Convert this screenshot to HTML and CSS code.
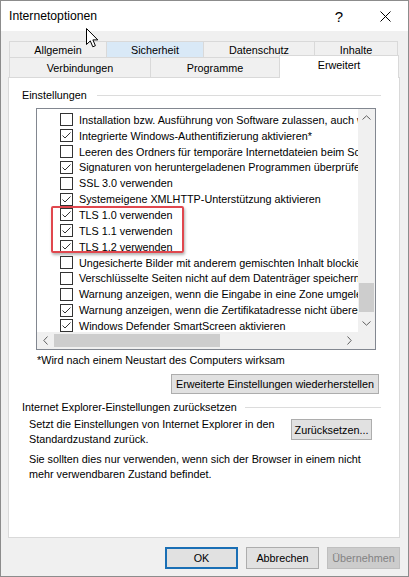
FILE: index.html
```html
<!DOCTYPE html>
<html>
<head>
  <title>Internetoptionen</title>
  <link rel="stylesheet" href="styles.css">
</head>
<body>
  <div class="window">
    <div class="titlebar">
      <span class="title">Internetoptionen</span>
      <span class="help">?</span>
      <svg class="close" width="11" height="11" viewBox="0 0 11 11">
        <path d="M0.5 0.5 L10.5 10.5 M10.5 0.5 L0.5 10.5" stroke="#000" stroke-width="1" fill="none"/>
      </svg>
    </div>
    <div class="body">
      <div class="tab-row back">
        <div class="tab allgemein">Allgemein</div>
        <div class="tab sicherheit hover">Sicherheit</div>
        <div class="tab datenschutz">Datenschutz</div>
        <div class="tab inhalte last">Inhalte</div>
      </div>
      <div class="tab-row front">
        <div class="tab verbindungen">Verbindungen</div>
        <div class="tab programme">Programme</div>
        <div class="tab erweitert selected">Erweitert</div>
      </div>
      <div class="panel">
        <div class="group-title">
          <span>Einstellungen</span>
          <div class="rule"></div>
        </div>
        <div class="listbox">
          <div class="list-main">
            <div class="rows">
              <div class="row"><span class="check"></span>Installation bzw. Ausführung von Software zulassen, auch wenn die Signatur ungültig ist</div>
              <div class="row"><span class="check on"></span>Integrierte Windows-Authentifizierung aktivieren*</div>
              <div class="row"><span class="check"></span>Leeren des Ordners für temporäre Internetdateien beim Schließen des Browsers</div>
              <div class="row"><span class="check on"></span>Signaturen von heruntergeladenen Programmen überprüfen</div>
              <div class="row"><span class="check"></span>SSL 3.0 verwenden</div>
              <div class="row"><span class="check on"></span>Systemeigene XMLHTTP-Unterstützung aktivieren</div>
              <div class="row"><span class="check on"></span>TLS 1.0 verwenden</div>
              <div class="row"><span class="check on"></span>TLS 1.1 verwenden</div>
              <div class="row"><span class="check on"></span>TLS 1.2 verwenden</div>
              <div class="row"><span class="check"></span>Ungesicherte Bilder mit anderem gemischten Inhalt blockieren</div>
              <div class="row"><span class="check"></span>Verschlüsselte Seiten nicht auf dem Datenträger speichern</div>
              <div class="row"><span class="check"></span>Warnung anzeigen, wenn die Eingabe in eine Zone umgeleitet wird</div>
              <div class="row"><span class="check on"></span>Warnung anzeigen, wenn die Zertifikatadresse nicht übereinstimmt*</div>
              <div class="row"><span class="check on"></span>Windows Defender SmartScreen aktivieren</div>
            </div>
            <div class="vscroll">
              <div class="arrow">
                <svg width="9" height="5" viewBox="0 0 9 5"><path d="M0.5 4.5 L4.5 0.8 L8.5 4.5" stroke="#606060" fill="none"/></svg>
              </div>
              <div class="vtrack"><div class="vthumb"></div></div>
              <div class="arrow">
                <svg width="9" height="5" viewBox="0 0 9 5"><path d="M0.5 0.5 L4.5 4.2 L8.5 0.5" stroke="#606060" fill="none"/></svg>
              </div>
            </div>
          </div>
          <div class="hscroll-row">
            <div class="hscroll">
              <div class="arrow">
                <svg width="5" height="9" viewBox="0 0 5 9"><path d="M4.5 0.5 L0.8 4.5 L4.5 8.5" stroke="#606060" fill="none"/></svg>
              </div>
              <div class="htrack"><div class="hthumb"></div></div>
              <div class="arrow">
                <svg width="5" height="9" viewBox="0 0 5 9"><path d="M0.5 0.5 L4.2 4.5 L0.5 8.5" stroke="#606060" fill="none"/></svg>
              </div>
            </div>
            <div class="corner"></div>
          </div>
          <div class="highlight"></div>
        </div>
        <p class="note">*Wird nach einem Neustart des Computers wirksam</p>
        <div class="restore-row">
          <button class="btn restore">Erweiterte Einstellungen wiederherstellen</button>
        </div>
        <div class="group-title second">
          <span>Internet Explorer-Einstellungen zurücksetzen</span>
          <div class="rule"></div>
        </div>
        <div class="reset">
          <p>Setzt die Einstellungen von Internet Explorer in den<br>Standardzustand zurück.</p>
          <button class="btn reset-btn">Zurücksetzen...</button>
        </div>
        <p class="warn">Sie sollten dies nur verwenden, wenn sich der Browser in einem nicht<br>mehr verwendbaren Zustand befindet.</p>
      </div>
      <div class="buttons">
        <button class="btn default">OK</button>
        <button class="btn">Abbrechen</button>
        <button class="btn disabled">Übernehmen</button>
      </div>
    </div>
    <svg class="cursor" width="13" height="20" viewBox="0 0 13 20">
      <path d="M0.5 0.5 L0.5 16.5 L4.3 12.9 L6.8 18.8 L9.4 17.7 L6.9 11.9 L11.8 11.9 Z" fill="#fff" stroke="#000" stroke-width="1" stroke-linejoin="round"/>
    </svg>
  </div>
</body>
</html>
```

FILE: styles.css
```css
html, body {
  margin: 0;
  height: 100%;
  background: #f0f0f0;
}
body {
  font-family: "Liberation Sans", Arial, sans-serif;
  font-size: 10.8px;
  color: #000;
}
p {
  margin: 0;
}
.window {
  position: relative;
  width: 409px;
  height: 577px;
  box-sizing: border-box;
  border: 1px solid #8c8c8c;
  background: #f0f0f0;
  display: flex;
  flex-direction: column;
}
.titlebar {
  height: 30px;
  flex-shrink: 0;
  background: #fff;
  display: flex;
  align-items: center;
  padding: 0 17px 0 8px;
}
.title {
  flex: 1;
  font-size: 12.2px;
}
.help {
  font-size: 15px;
  margin-right: 37px;
}
.body {
  flex: 1;
  display: flex;
  flex-direction: column;
  padding: 10px 8px 0 7px;
}

/* tabs */
.tab-row {
  display: flex;
  margin-left: 1px;
}
.tab {
  box-sizing: border-box;
  border: 1px solid #d9d9d9;
  border-bottom: none;
  border-right: none;
  background: #f0f0f0;
  text-align: center;
}
.tab.last {
  border-right: 1px solid #d9d9d9;
}
.back .tab {
  height: 16px;
  line-height: 17px;
}
.front .tab {
  height: 20px;
  line-height: 20px;
}
.allgemein { width: 97px; }
.sicherheit { width: 97px; }
.datenschutz { width: 111px; }
.inhalte { width: 84px; }
.verbindungen { width: 141px; }
.programme { width: 129px; }
.tab.hover {
  background: #d9e9f7;
}
.tab.selected {
  width: 120px;
  background: #fff;
  border-right: 1px solid #d9d9d9;
  height: 23px;
  margin-top: -2px;
  margin-bottom: -1px;
  line-height: 18px;
  position: relative;
  z-index: 1;
}

/* panel */
.panel {
  height: 461px;
  box-sizing: border-box;
  border: 1px solid #d9d9d9;
  background: #fff;
  padding: 10px 18px 0 13px;
}
.group-title {
  display: flex;
  align-items: center;
  height: 14px;
  gap: 10px;
}
.rule {
  flex: 1;
  border-top: 1px solid #dcdcdc;
}
.listbox {
  position: relative;
  margin: 6px 0 0 14px;
  width: 340px;
  height: 242px;
  box-sizing: border-box;
  border: 1px solid #828790;
  display: flex;
  flex-direction: column;
}
.list-main {
  display: flex;
  height: 223px;
}
.rows {
  width: 321px;
  box-sizing: border-box;
  padding-top: 3px;
  overflow: hidden;
}
.row {
  display: flex;
  align-items: center;
  height: 15.85px;
  padding-left: 23px;
  gap: 6px;
  white-space: nowrap;
}
.check {
  flex-shrink: 0;
  width: 13px;
  height: 13px;
  box-sizing: border-box;
  border: 1px solid #333;
  background: #fff;
}
.check.on {
  background: #fff url("data:image/svg+xml,%3Csvg xmlns='http://www.w3.org/2000/svg' width='11' height='11'%3E%3Cpath d='M1.5 5.5 L4 8 L9.5 2.5' stroke='%23333' fill='none'/%3E%3C/svg%3E") no-repeat center;
}
.vscroll {
  width: 17px;
  background: #f0f0f0;
  display: flex;
  flex-direction: column;
}
.arrow {
  width: 17px;
  height: 17px;
  flex-shrink: 0;
  display: flex;
  align-items: center;
  justify-content: center;
}
.vtrack {
  flex: 1;
}
.vthumb {
  margin: 157px 0 0 1px;
  width: 15px;
  height: 29px;
  background: #cdcdcd;
}
.hscroll-row {
  display: flex;
  height: 17px;
}
.hscroll {
  width: 321px;
  display: flex;
  background: #f0f0f0;
}
.htrack {
  flex: 1;
}
.hthumb {
  margin-top: 2px;
  width: 166px;
  height: 13px;
  background: #cdcdcd;
}
.corner {
  flex: 1;
  background: #f0f0f0;
}
.highlight {
  position: absolute;
  left: 14px;
  top: 97px;
  width: 133px;
  height: 47px;
  box-sizing: border-box;
  border: 2px solid #e0474e;
  border-radius: 2px;
  box-shadow: 1px 2px 3px rgba(0, 0, 0, 0.3);
}
.note {
  margin: 3px 0 0 15px;
  line-height: 14px;
}
.restore-row {
  display: flex;
  justify-content: flex-end;
  margin: 7px 2px 0 0;
}
.btn {
  height: 22px;
  box-sizing: border-box;
  border: 1px solid #adadad;
  background: #e1e1e1;
  font-family: inherit;
  font-size: inherit;
  color: #000;
  padding: 0;
}
.btn.restore {
  width: 208px;
  height: 20px;
}
.group-title.second {
  margin-top: 6px;
  gap: 8px;
}
.reset {
  display: flex;
  align-items: flex-start;
  margin: 3px 9px 0 7px;
  line-height: 15px;
}
.reset p {
  flex: 1;
}
.btn.reset-btn {
  width: 81px;
  height: 21px;
  margin-top: 2px;
}
.warn {
  margin: 5px 0 0 7px;
  line-height: 15px;
}
.buttons {
  display: flex;
  justify-content: flex-end;
  gap: 8px;
  margin-top: 9px;
}
.buttons .btn {
  width: 73px;
}
.btn.default {
  border: 1px solid #1a6fb5;
  box-shadow: inset 0 0 0 1px #1a6fb5;
}
.btn.disabled {
  background: #cccccc;
  border-color: #bfbfbf;
  color: #838383;
}
.cursor {
  position: absolute;
  left: 85px;
  top: 27px;
}
```
